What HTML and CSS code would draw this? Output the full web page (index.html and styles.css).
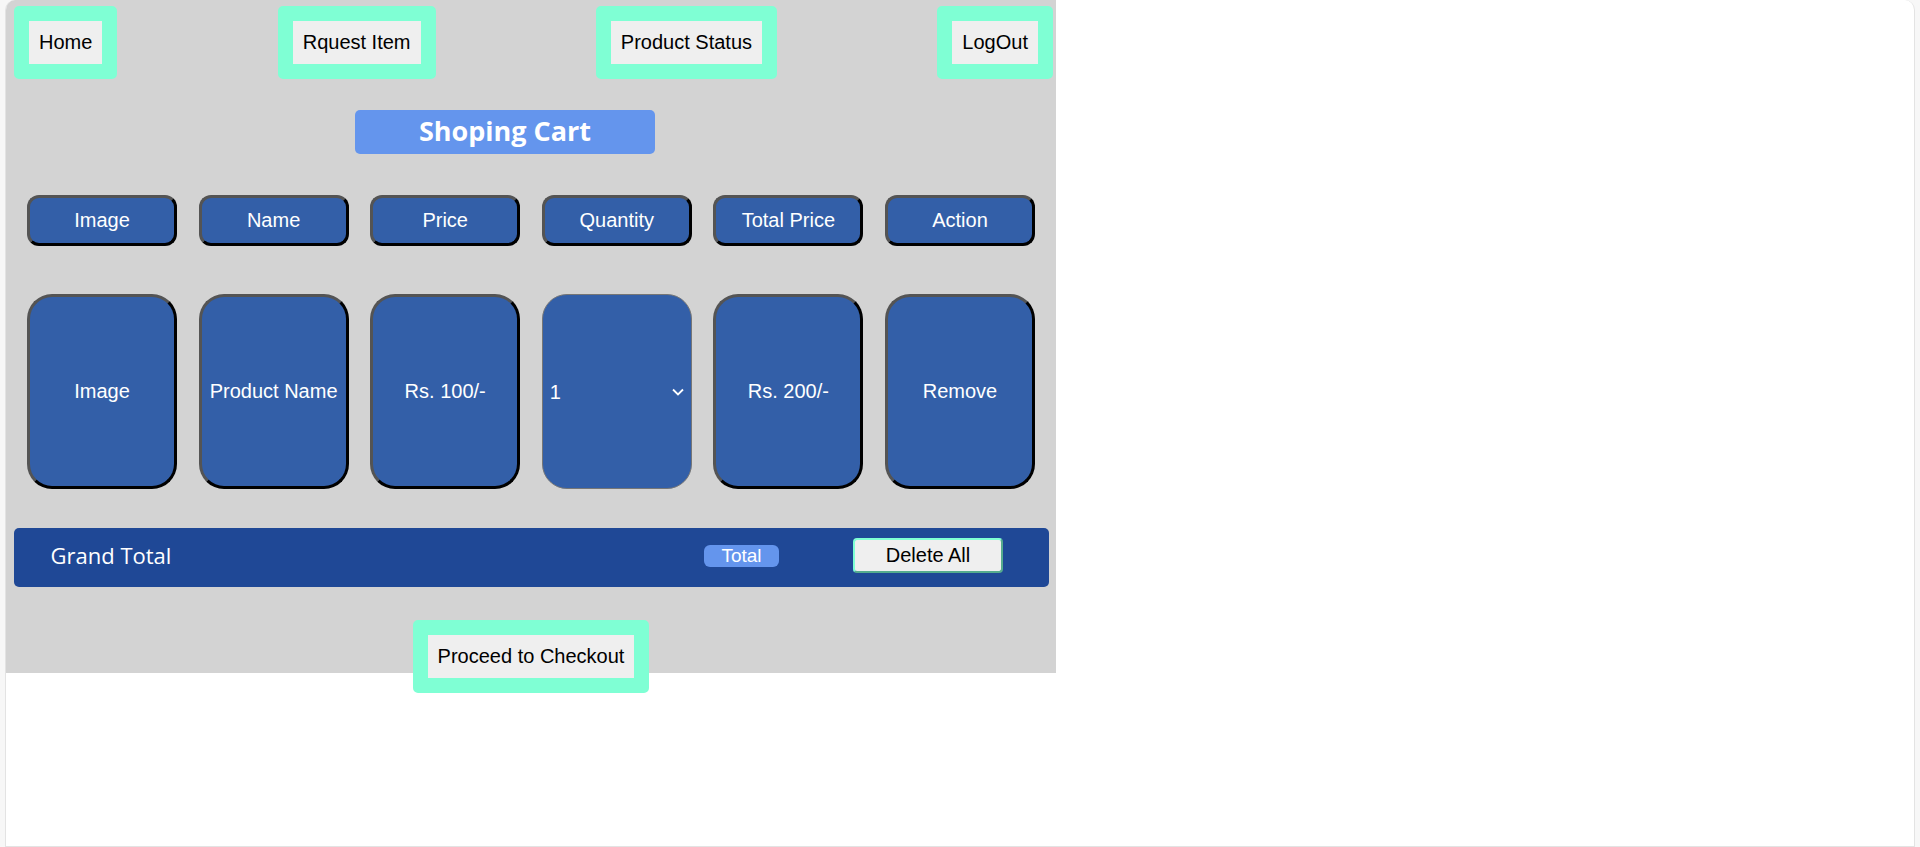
FILE: index.html
```html
<!DOCTYPE html>
<html lang="en">

<head>
    <meta charset="UTF-8">
    <meta name="viewport" content="width=device-width, initial-scale=1.0">
    <title>Shoping Cart</title>
    <link rel="stylesheet" href="styles.css">
</head>

<body>
    <div class="frame">
        <div class="cart-page">
            <nav class="top-nav">
                <button class="nav-btn">Home</button>
                <button class="nav-btn">Rquest Item</button>
                <button class="nav-btn">Product Status</button>
                <button class="nav-btn">LogOut</button>
            </nav>

            <h2 class="cart-title">Shoping Cart</h2>

            <div class="cart-row head-row">
                <div class="cell">Image</div>
                <div class="cell">Name</div>
                <div class="cell">Price</div>
                <div class="cell">Quantity</div>
                <div class="cell">Total Price</div>
                <div class="cell">Action</div>
            </div>

            <div class="cart-row item-row">
                <div class="cell">Image</div>
                <div class="cell">Product Name</div>
                <div class="cell">Rs. 100/-</div>
                <div class="qty-wrap">
                    <select class="qty">
                        <option>1</option>
                        <option>2</option>
                        <option>3</option>
                    </select>
                    <svg class="qty-arrow" width="14" height="14" viewBox="0 0 14 14">
                        <path d="M2 4.5 L7 9.5 L12 4.5" fill="none" stroke="#fff" stroke-width="1.8" />
                    </svg>
                </div>
                <div class="cell">Rs. 200/-</div>
                <div class="cell">Remove</div>
            </div>

            <div class="grand-total">
                <span class="gt-label">Grand Total</span>
                <span class="gt-value">Total</span>
                <button class="delete-all">Delete All</button>
            </div>

            <div class="checkout-area">
                <button class="nav-btn">Proceed to Checkout</button>
            </div>
        </div>
    </div>
</body>

</html>
```

FILE: styles.css
```css
html,
body {
    margin: 0;
    padding: 0;
    height: 100%;
    background-color: #f7f7f7;
}

body {
    font-family: "Liberation Sans", Arial, sans-serif;
}

.frame {
    box-sizing: border-box;
    height: 100%;
    margin: 0 5px;
    background-color: #fff;
    border: 1px solid #e3e3e3;
    border-top: none;
    border-radius: 10px 10px 0 0;
    overflow: hidden;
}

.cart-page {
    width: 1050px;
    height: 673px;
    padding-top: 6px;
    box-sizing: border-box;
    background-color: lightgray;
}

.top-nav {
    display: flex;
    justify-content: space-between;
    padding: 0 3px 0 8px;
}

.nav-btn {
    font-family: "Liberation Sans", Arial, sans-serif;
    font-size: 20px;
    padding: 10px;
    background-color: #efefef;
    color: #000;
    border: 15px solid aquamarine;
    border-radius: 5px;
}

.cart-title {
    width: 300px;
    height: 44px;
    margin: 31px 0 0 349px;
    background-color: cornflowerblue;
    color: #fff;
    border-radius: 5px;
    font-family: "Open Sans", "Noto Sans", sans-serif;
    font-size: 27px;
    font-weight: 700;
    line-height: 41px;
    text-align: center;
}

.cart-row {
    display: flex;
    gap: 21.6px;
    padding-left: 21px;
}

.cell,
.qty {
    box-sizing: border-box;
    width: 150px;
    background-color: #335fa8;
    color: #fff;
    font-family: "Liberation Sans", Arial, sans-serif;
    font-size: 20px;
}

.cell {
    display: flex;
    justify-content: center;
    align-items: center;
    border: 3px outset #000;
}

.head-row {
    margin-top: 41px;
}

.head-row .cell {
    height: 51px;
    border-radius: 12px;
}

.item-row {
    margin-top: 48px;
}

.item-row .cell,
.item-row .qty {
    height: 195px;
    border-radius: 25px;
}

/* select with its own chevron on top */
.qty-wrap {
    position: relative;
    width: 150px;
}

.qty {
    appearance: none;
    -webkit-appearance: none;
    border: 1px solid #767676;
    padding: 0 0 0 7px;
    outline: none;
}

.qty-arrow {
    position: absolute;
    right: 7px;
    top: 91px;
    pointer-events: none;
}

.grand-total {
    box-sizing: border-box;
    display: flex;
    align-items: center;
    height: 59px;
    margin: 39px 7px 0 7.5px;
    padding: 0 46px 4px 37px;
    background-color: #1f4896;
    border-radius: 5px;
    color: #fff;
}

.gt-label {
    font-family: "Open Sans", "Noto Sans", sans-serif;
    font-size: 22px;
    margin-bottom: 2px;
}

.gt-value {
    margin: 0 74px 0 auto;
    width: 75px;
    height: 22px;
    line-height: 22px;
    text-align: center;
    font-size: 19px;
    background-color: cornflowerblue;
    border-radius: 6px;
}

.delete-all {
    width: 150px;
    height: 35px;
    font-family: "Liberation Sans", Arial, sans-serif;
    font-size: 20px;
    background-color: #efefef;
    color: #000;
    border: 2px outset aquamarine;
    border-radius: 4px;
}

.checkout-area {
    margin-top: 33px;
    text-align: center;
}
```
